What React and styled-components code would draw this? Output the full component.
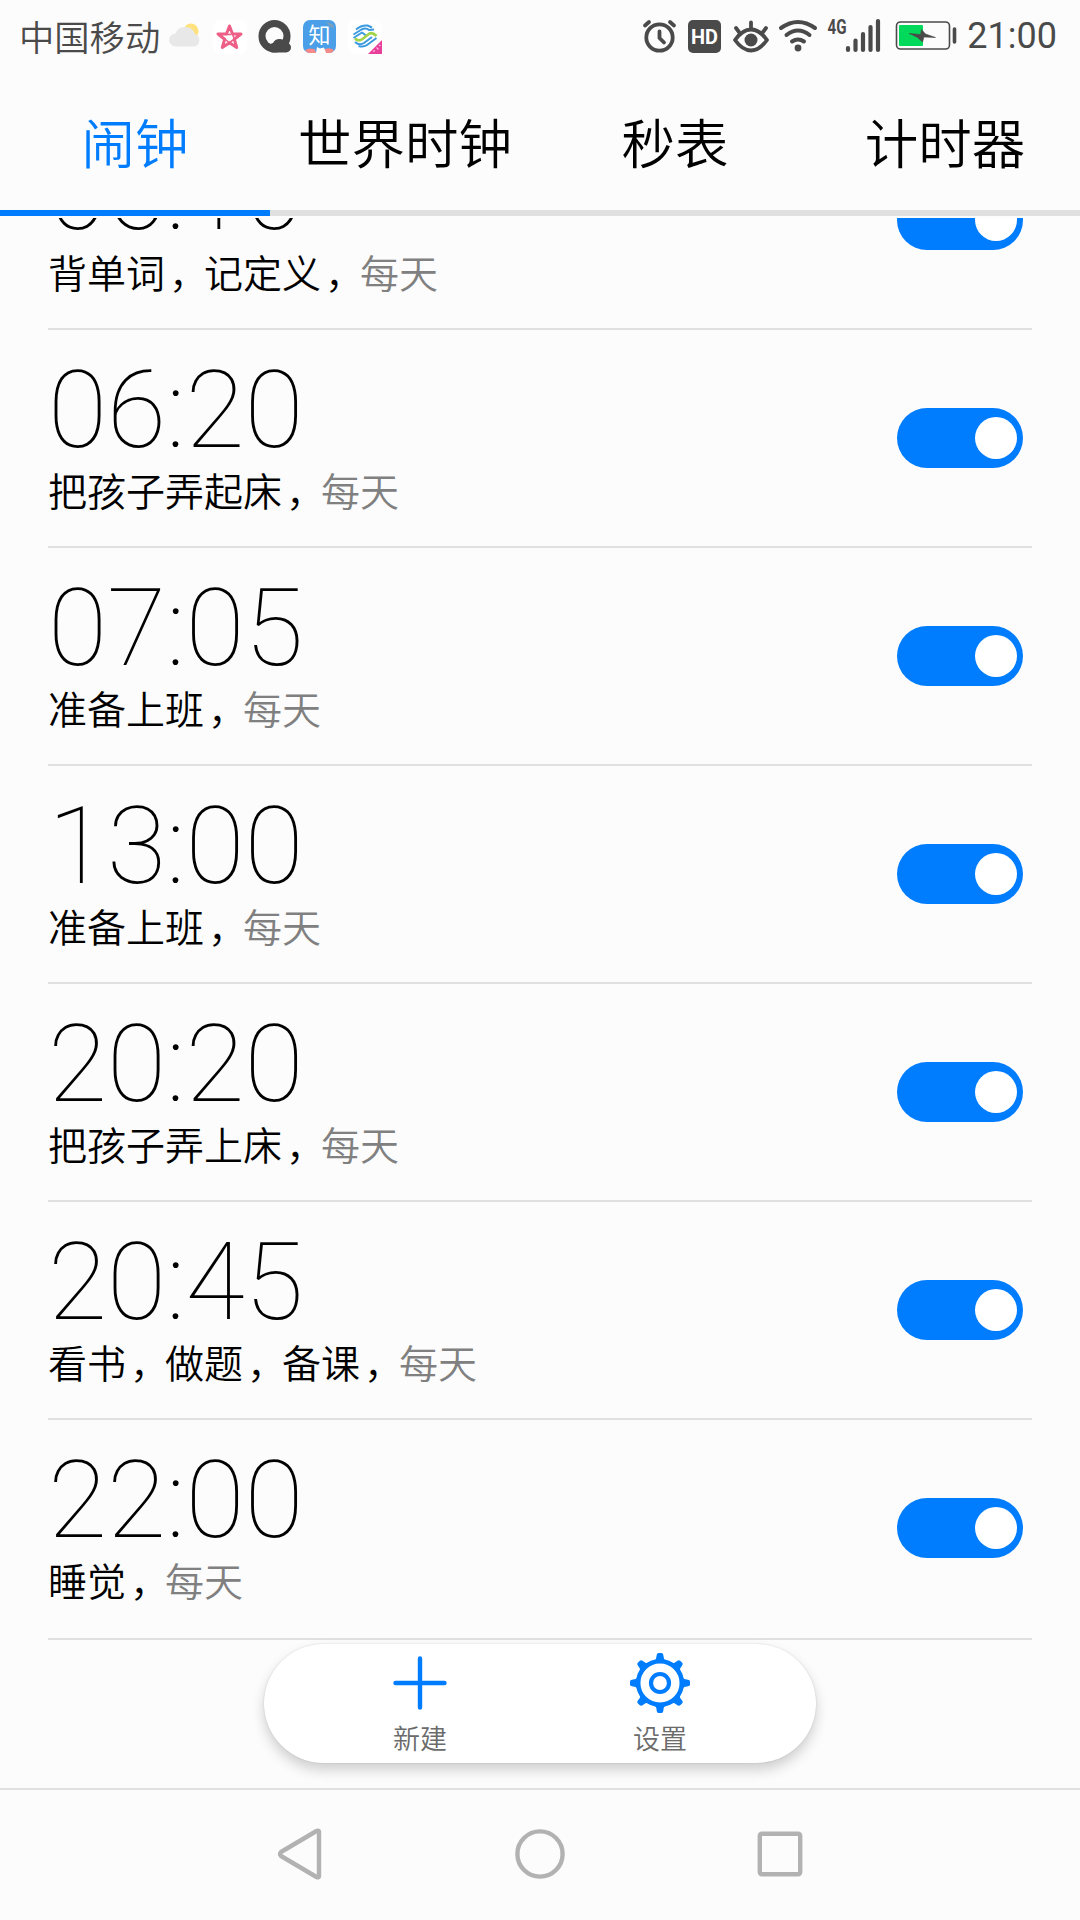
import React, { useState } from "react";
import styled, { createGlobalStyle } from "styled-components";

const GlobalStyle = createGlobalStyle`
  * {
    box-sizing: border-box;
  }
  body {
    margin: 0;
    background: #fcfcfc;
    font-family: Roboto, "Noto Sans CJK SC", sans-serif;
  }
`;

const Screen = styled.div`
  width: 1080px;
  height: 1920px;
  display: flex;
  flex-direction: column;
  background: #fcfcfc;
  overflow: hidden;
`;

const StatusBar = styled.header`
  height: 72px;
  flex: none;
  display: flex;
  align-items: center;
  justify-content: space-between;
  padding: 0 23px 0 19px;
  color: #4a4a4a;
`;

const StatusGroup = styled.div`
  display: flex;
  align-items: center;
  height: 72px;
  svg {
    display: block;
    flex: none;
  }
`;

const Carrier = styled.span`
  width: 141px;
  white-space: nowrap;
  font-family: "Noto Sans CJK SC", sans-serif;
  font-size: 35.3px;
  font-weight: 350;
  line-height: 72px;
`;

const StatusTime = styled.span`
  font-size: 36px;
  line-height: 76px;
  margin-left: 10px;
`;

const Tabs = styled.nav`
  height: 144px;
  flex: none;
  display: flex;
  border-bottom: 6px solid #e0e0e0;
`;

const Tab = styled.button`
  flex: 1;
  height: 144px;
  padding: 0;
  border: 0;
  border-bottom: 6px solid ${({ $active }) => ($active ? "#007dff" : "transparent")};
  background: none;
  color: ${({ $active }) => ($active ? "#007dff" : "#000")};
  font-family: "Noto Sans CJK SC", sans-serif;
  font-size: 53.5px;
  font-weight: 350;
  line-height: 132px;
  cursor: pointer;
`;

const AlarmList = styled.main`
  position: relative;
  margin-top: 2px;
  height: 1570px;
  flex: none;
  display: flex;
  flex-direction: column;
  overflow: hidden;
  padding: 0 48px;
`;

const AlarmRow = styled.div`
  height: 218px;
  flex: none;
  display: flex;
  align-items: center;
  justify-content: space-between;
  padding-right: 9px;
  border-bottom: 2px solid #e0e0e0;
  &:first-child {
    margin-top: -106px;
  }
  &:last-of-type {
    height: 220px;
    padding-bottom: 2px;
  }
`;

const AlarmText = styled.div`
  display: flex;
  flex-direction: column;
`;

const Time = styled.div`
  font-size: 108px;
  font-weight: 100;
  line-height: 108px;
  color: #000;
`;

const Label = styled.div`
  height: 56px;
  font-family: "Noto Sans CJK SC", sans-serif;
  font-size: 39px;
  line-height: 50px;
  font-weight: 350;
  color: #000;
`;

const Comma = styled.span`
  display: inline-block;
  width: 39px;
  text-indent: 4px;
`;

const Repeat = styled.span`
  color: #808080;
`;

const Switch = styled.button`
  width: 126px;
  height: 60px;
  padding: 0 6px;
  display: flex;
  align-items: center;
  justify-content: ${({ $on }) => ($on ? "flex-end" : "flex-start")};
  border: 0;
  border-radius: 30px;
  background: ${({ $on }) => ($on ? "#007dff" : "#c4c4c4")};
  cursor: pointer;
`;

const Knob = styled.span`
  width: 42px;
  height: 42px;
  border-radius: 50%;
  background: #fff;
`;

const ActionBar = styled.section`
  position: absolute;
  left: 264px;
  bottom: 25px;
  width: 552px;
  height: 119px;
  display: flex;
  padding: 0 36px;
  border-radius: 60px;
  background: #fff;
  box-shadow: 0 7px 13px rgba(0, 0, 0, 0.18), 0 0 2px rgba(0, 0, 0, 0.14);
`;

const Action = styled.button`
  flex: 1;
  display: flex;
  flex-direction: column;
  align-items: center;
  padding: 9px 0 0;
  border: 0;
  background: none;
  color: #6b6b6b;
  font-family: "Noto Sans CJK SC", sans-serif;
  font-size: 27px;
  font-weight: 350;
  line-height: 50px;
  cursor: pointer;
`;

const NavBar = styled.footer`
  height: 132px;
  flex: none;
  display: flex;
  justify-content: center;
  gap: 180px;
  align-items: center;
  padding-bottom: 2px;
  border-top: 2px solid #e0e0e0;
`;

const alarms = [
  { time: "06:10", labels: ["背单词", "记定义"] },
  { time: "06:20", labels: ["把孩子弄起床"] },
  { time: "07:05", labels: ["准备上班"] },
  { time: "13:00", labels: ["准备上班"] },
  { time: "20:20", labels: ["把孩子弄上床"] },
  { time: "20:45", labels: ["看书", "做题", "备课"] },
  { time: "22:00", labels: ["睡觉"] },
];

const tabs = ["闹钟", "世界时钟", "秒表", "计时器"];

// Notification icons, drawn on one strip next to the carrier name
const NotificationIcons = () => (
  <svg width="226" height="72" viewBox="160 0 226 72">
    <circle cx="191" cy="31" r="7.5" fill="#ffe17d" />
    <path d="M176 46.500a6.500 6.500 0 0 1-.6-13A10.500 10.500 0 0 1 195 34a6.500 6.500 0 0 1-1 12.500z" fill="#e8e8e8" />
    <rect x="213" y="20" width="34" height="34" rx="7" fill="#fff" />
    <path
      d="M229.500 26L232.500 34H241L234.300 39.200L236.700 47.500L229.500 42.800L222.300 47.500L224.700 39.200L218 34H226.500z"
      fill="none"
      stroke="#ee5f87"
      strokeWidth="3"
      strokeLinejoin="round"
    />
    <path d="M226 34.500h5M232.500 34l1.800 5M234.500 39l-5 3.500M229 42.500l-4-3.500" fill="none" stroke="#ee5f87" strokeWidth="1.600" />
    <rect x="258.500" y="20" width="32" height="32.500" rx="16" fill="#4a4a4a" />
    <circle cx="274.500" cy="36" r="9" fill="#fcfcfc" />
    <path d="M272 52.500a5 5 0 0 1 1-9.500 7.500 7.500 0 0 1 13-.5 5 5 0 0 1 0 10z" fill="#4a4a4a" />
    <rect x="303" y="20" width="33" height="33" rx="7" fill="#4a9fe8" />
    <path d="M326 21.500l7 3 1 4-4-2z" fill="#7f9fb8" />
    <path d="M305 50.500q4-3.500 10-1l1 3.500h-8zM334 50.500q-3-3.500-9-1.500v4h6z" fill="#f58a8a" />
    <path d="M316 53l1-6 3 1.500 4-1 2 5.500z" fill="#fff" />
    <text x="319.500" y="43" textAnchor="middle" fontSize="22" fill="#fff" fontFamily="Noto Sans CJK SC, sans-serif">知</text>
    <rect x="348" y="20" width="34" height="34" rx="7" fill="#fff" />
    <g fill="none" strokeWidth="2" strokeLinejoin="round">
      <path d="M356 29.500Q361 25 367.500 25.500L372 27.500" stroke="#3c9be0" />
      <path d="M353.500 34.500L361.500 29.500Q366 27.500 369 30L374 29.500" stroke="#3c9be0" />
      <path d="M353.500 38L362 32.500L366 35.500" stroke="#3c9be0" />
      <path d="M355 38.500Q358.500 42 362.500 39L369.500 33.500Q372.500 32 376.500 36" stroke="#a3d34a" strokeWidth="2.600" />
      <path d="M355 42Q359.500 46 364 43L372 37" stroke="#3c9be0" />
      <path d="M358.500 46Q363.500 47.500 367 45L376.500 38" stroke="#3c9be0" />
    </g>
    <path d="M382 40v14h-14z" fill="#e8409a" />
    <path d="M373 51.500l2-1M376.500 47.500l2 2M379 45l1.500 1" stroke="#fbb9dc" strokeWidth="1.200" />
  </svg>
);

const SystemIcons = () => (
  <svg width="317" height="72" viewBox="640 0 317 72" fill="none" stroke="#4a4a4a" strokeLinecap="round" strokeLinejoin="round">
    <g strokeWidth="3.800">
      <circle cx="659.500" cy="37.500" r="13.200" />
      <path d="M659.500 31.500v6.500l4.500 4.500" />
      <path d="M645 25.500l4-3.500M674 25.500l-4-3.500" />
    </g>
    <rect x="688" y="20" width="33" height="33" rx="5" fill="#4a4a4a" stroke="none" />
    <text x="704.500" y="43.800" textAnchor="middle" fontSize="21" fontWeight="700" fill="#fff" stroke="none" textLength="27" lengthAdjust="spacingAndGlyphs" fontFamily="Roboto, sans-serif">HD</text>
    <g strokeWidth="3.800">
      <path d="M735 40q7.500-10.500 16-10.500T767 40q-7.500 10.500-16 10.500T735 40z" />
      <path d="M751 22.500v6M736 28l3 4M766 28l-3 4" />
    </g>
    <circle cx="751" cy="40" r="6.500" fill="#4a4a4a" stroke="none" />
    <g strokeWidth="4">
      <path d="M781 28q17-12 34 0M786.500 35q11.500-9 23 0M792 41.500q6-4 12 0" />
    </g>
    <circle cx="798" cy="48" r="3.400" fill="#4a4a4a" stroke="none" />
    <text x="827.500" y="33.700" fontSize="20" fontWeight="700" fill="#4a4a4a" stroke="none" textLength="19" lengthAdjust="spacingAndGlyphs" fontFamily="Roboto, sans-serif">4G</text>
    <path d="M848 48v2M855.500 40.500v9.500M863 34v16M870.500 27v23M878 21v29" strokeWidth="4.200" />
    <rect x="896.500" y="22" width="53" height="27" rx="4" strokeWidth="1.600" />
    <rect x="899" y="25" width="24" height="21" rx="1" fill="#00d95a" stroke="none" />
    <path d="M909.500 33.500L920.500 34.500L921.500 29.500L925.500 34L935.500 37.500L924 37L922.500 42L917.500 37.500z" fill="#4a4a4a" stroke="#4a4a4a" strokeWidth=".6" />
    <path d="M954.500 29v13" strokeWidth="3.600" />
  </svg>
);

const PlusIcon = () => (
  <svg width="60" height="60" viewBox="0 0 60 60" fill="none" stroke="#007dff" strokeWidth="4.400" strokeLinecap="round">
    <path d="M30 5.500v49M5.500 30h49" />
  </svg>
);

const GearIcon = () => (
  <svg width="60" height="60" viewBox="-30 -30 60 60" fill="#007dff">
    {[0, 45, 90, 135, 180, 225, 270, 315].map((a) => (
      <path key={a} d="M-5.500-22Q-3.500-24-3.300-28Q-3-30-1.500-30H1.500Q3-30 3.300-28Q3.500-24 5.500-22z" transform={`rotate(${a})`} />
    ))}
    <circle r="21.800" fill="none" stroke="#007dff" strokeWidth="4.500" />
    <circle r="9" fill="none" stroke="#007dff" strokeWidth="4.200" />
  </svg>
);

const App = () => {
  const [active, setActive] = useState(0);
  const [enabled, setEnabled] = useState(alarms.map(() => true));

  const toggle = (index) => setEnabled(enabled.map((on, i) => (i === index ? !on : on)));

  return (
    <Screen>
      <GlobalStyle />
      <StatusBar>
        <StatusGroup>
          <Carrier>中国移动</Carrier>
          <NotificationIcons />
        </StatusGroup>
        <StatusGroup>
          <SystemIcons />
          <StatusTime>21:00</StatusTime>
        </StatusGroup>
      </StatusBar>

      <Tabs>
        {tabs.map((tab, i) => (
          <Tab key={tab} $active={i === active} onClick={() => setActive(i)}>
            {tab}
          </Tab>
        ))}
      </Tabs>

      <AlarmList>
        {alarms.map((alarm, i) => (
          <AlarmRow key={alarm.time}>
            <AlarmText>
              <Time>{alarm.time}</Time>
              <Label>
                {alarm.labels.map((label) => (
                  <React.Fragment key={label}>
                    {label}
                    <Comma>，</Comma>
                  </React.Fragment>
                ))}
                <Repeat>每天</Repeat>
              </Label>
            </AlarmText>
            <Switch $on={enabled[i]} onClick={() => toggle(i)}>
              <Knob />
            </Switch>
          </AlarmRow>
        ))}
        <ActionBar>
          <Action>
            <PlusIcon />
            新建
          </Action>
          <Action>
            <GearIcon />
            设置
          </Action>
        </ActionBar>
      </AlarmList>

      <NavBar>
        <svg width="60" height="60" viewBox="0 0 60 60" fill="none" stroke="#b2b2b2" strokeWidth="4.400" strokeLinejoin="round">
          <path d="M49 7.500v45Q48.500 54 46.500 53L11 32Q9 30 11 28L46.500 7Q48.500 6 49 7.500z" />
        </svg>
        <svg width="60" height="60" viewBox="0 0 60 60" fill="none" stroke="#b2b2b2" strokeWidth="4.400">
          <circle cx="30" cy="30" r="22.600" />
        </svg>
        <svg width="60" height="60" viewBox="0 0 60 60" fill="none" stroke="#b2b2b2" strokeWidth="4.400">
          <rect x="9.800" y="9.800" width="40.400" height="40.400" rx="2" />
        </svg>
      </NavBar>
    </Screen>
  );
};

export default App;
